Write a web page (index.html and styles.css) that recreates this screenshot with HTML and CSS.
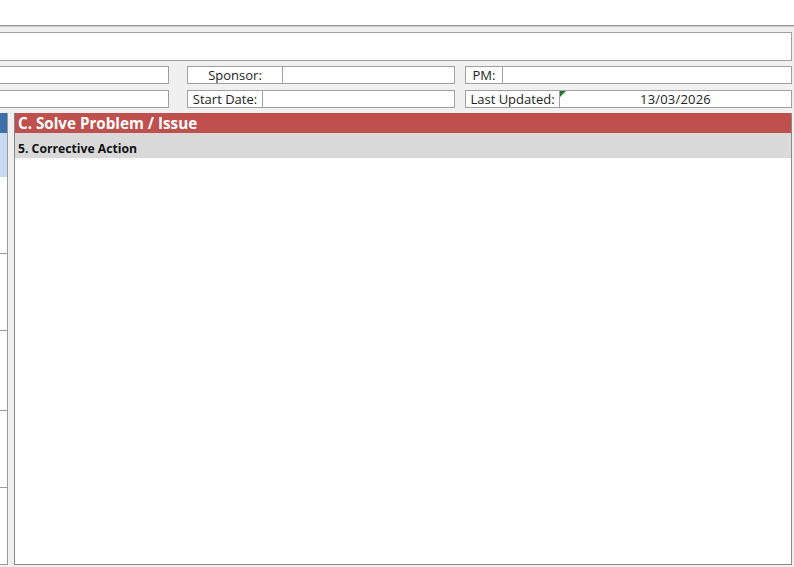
FILE: index.html
```html
<!DOCTYPE html>
<html lang="en">
<head>
    <meta charset="UTF-8">
    <title>Corrective Action</title>
    <link rel="stylesheet" href="styles.css">
</head>
<body>
    <div class="topbar"></div>
    <div class="sheet">
        <div class="title-box"></div>

        <div class="info-row">
            <div class="field cut"></div>
            <div class="label sponsor">Sponsor:</div>
            <div class="value sponsor-val"></div>
            <div class="label pm">PM:</div>
            <div class="value pm-val"></div>
        </div>
        <div class="info-row">
            <div class="field cut"></div>
            <div class="label start">Start Date:</div>
            <div class="value start-val"></div>
            <div class="label updated">Last Updated:</div>
            <div class="value updated-val"><span class="flag"></span>13/03/2026</div>
        </div>

        <div class="section">
            <div class="side-col">
                <div class="side-head"></div>
                <div class="side-sub"></div>
                <div class="side-cell"></div>
                <div class="side-cell"></div>
                <div class="side-cell tall"></div>
                <div class="side-cell"></div>
                <div class="side-cell last"></div>
            </div>
            <div class="main">
                <div class="main-head">C. Solve Problem / Issue</div>
                <div class="main-sub">5. Corrective Action</div>
                <div class="main-body"></div>
            </div>
        </div>
    </div>
</body>
</html>
```

FILE: styles.css
```css
html, body {
    margin: 0;
    padding: 0;
    height: 100%;
    overflow: hidden;
}

body {
    font-family: "Open Sans", "Noto Sans", sans-serif;
    font-size: 13px;
    color: #222;
    background-color: #f0f0f0;
}

.topbar {
    height: 25px;
    background-color: #fff;
    border-bottom: 1px solid #9a9a9a;
    box-shadow: 0 1px 0 #c8c8c8;
}

.sheet {
    padding-top: 6px;
}

.title-box {
    width: 792px;
    height: 29px;
    box-sizing: border-box;
    background-color: #fff;
    border: 1px solid #a0a0a0;
    border-left: none;
}

.info-row {
    display: flex;
    height: 18px;
    margin-top: 5px;
}

.info-row + .info-row {
    margin-top: 6px;
}

.field, .label, .value {
    box-sizing: border-box;
    height: 18px;
    background-color: #fff;
    border: 1px solid #a0a0a0;
    line-height: 16px;
}

.field.cut {
    width: 169px;
    border-left: none;
    margin-right: 18px;
}

.label {
    text-align: center;
    white-space: nowrap;
}

.value {
    border-left: none;
    position: relative;
}

.sponsor { width: 96px; }
.sponsor-val { width: 172px; margin-right: 10px; }
.pm { width: 38px; }
.pm-val { width: 289px; }

.start { width: 76px; }
.start-val { width: 192px; margin-right: 10px; }
.updated { width: 95px; }
.updated-val { width: 232px; text-align: center; letter-spacing: 0.2px; }

.flag {
    position: absolute;
    top: 0;
    left: 0;
    width: 0;
    height: 0;
    border-top: 6px solid #1d7a30;
    border-right: 6px solid transparent;
}

.section {
    display: flex;
    margin-top: 5px;
    height: 452px;
}

.side-col {
    width: 8px;
    box-sizing: border-box;
    border-right: 1px solid #9a9a9a;
    background-color: #fff;
    display: flex;
    flex-direction: column;
    margin-right: 6px;
}

.side-head {
    height: 20px;
    background-color: #3f6fa8;
}

.side-sub {
    height: 44px;
    background-color: #c7daf1;
}

.side-cell {
    height: 77px;
    box-sizing: border-box;
    border-bottom: 1px solid #9a9a9a;
}

.side-cell.tall {
    height: 80px;
}

.side-cell.last {
    flex: 1;
}

.main {
    width: 778px;
    box-sizing: border-box;
    border: 1px solid #8a8a8a;
    border-top: none;
    background-color: #fff;
    display: flex;
    flex-direction: column;
}

.main-head {
    height: 20px;
    background-color: #c0504d;
    color: #fff;
    font-weight: bold;
    font-size: 15.2px;
    line-height: 21px;
    padding-left: 3px;
    white-space: nowrap;
}

.main-sub {
    height: 25px;
    background-color: #d9d9d9;
    font-weight: bold;
    font-size: 12.2px;
    line-height: 31px;
    padding-left: 3px;
    color: #111;
}

.main-body {
    flex: 1;
}
```
